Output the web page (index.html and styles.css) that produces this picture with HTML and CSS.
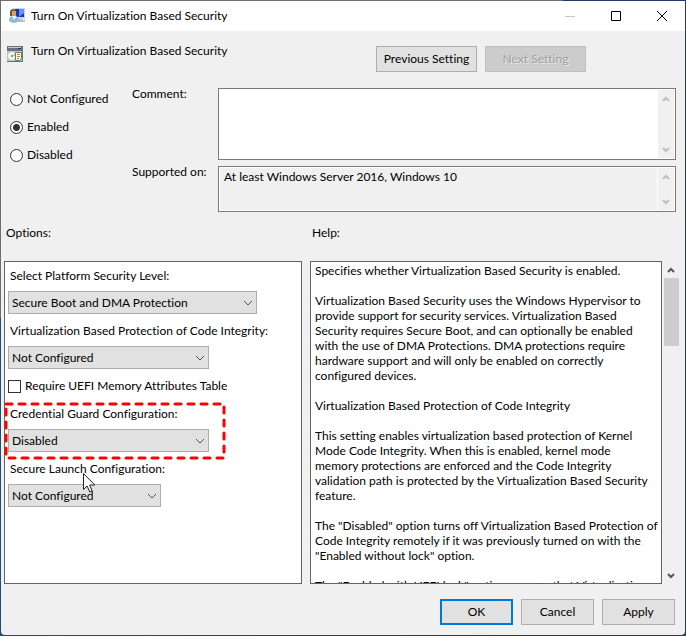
FILE: index.html
```
<!DOCTYPE html>
<html lang="en">
<head>
  <meta charset="UTF-8" />
  <meta name="viewport" content="width=device-width, initial-scale=1" />
  <title>Turn On Virtualization Based Security</title>
  <link rel="stylesheet" href="styles.css">
</head>
<body>
  <div class="window">
    <header class="titlebar">
      <svg class="icon" width="16" height="16" viewBox="0 0 16 16" aria-hidden="true">
        <path d="M4 0h12v11H5z" fill="#cdd3de"/>
        <path d="M6 1h9v8H6z" fill="#1238b4"/>
        <path d="M10 1h5v4l-5 4z" fill="#5f93f2"/>
        <path d="M9 11h4v1h3v2H9z" fill="#bdbdb4"/>
        <path d="M1 3q3-4 6 0v5H1z" fill="#6b5940"/>
        <path d="M3 3h4v5H3z" fill="#d9a266"/>
        <path d="M0 13q0-5 4-5 5 0 6 5-5 4-10 0z" fill="#8dbbe0"/>
        <path d="M3 8l2 4 3-4z" fill="#e9f5fd"/>
      </svg>
      <h1>Turn On Virtualization Based Security</h1>
      <div class="caption-buttons">
        <button type="button" aria-label="Minimize" disabled>
          <svg width="12" height="12" viewBox="0 0 12 12"><path d="M1 6.5h10" stroke="#c8c8c8"/></svg>
        </button>
        <button type="button" aria-label="Maximize">
          <svg width="12" height="12" viewBox="0 0 12 12"><path d="M1.5 1.5h9v9h-9z" fill="none" stroke="#000"/></svg>
        </button>
        <button type="button" aria-label="Close">
          <svg width="12" height="12" viewBox="0 0 12 12"><path d="M1 1l10 10M11 1L1 11" stroke="#000"/></svg>
        </button>
      </div>
    </header>

    <form class="dialog">
      <div class="setting-row">
        <div class="setting-name">
          <svg class="icon" width="16" height="16" viewBox="0 0 16 16" aria-hidden="true">
            <path d="M0 0h16v16H0z" fill="#4b8583"/>
            <path d="M0 0h15v5H0z" fill="#6d6d8c"/>
            <path d="M1 1h13v1H1z" fill="#c9c9d8"/>
            <path d="M11 2h3v1h-3z" fill="#30304a"/>
            <path d="M0 5h15v10H0z" fill="#b9c6b8"/>
            <circle cx="5" cy="10" r="4" fill="#f3f3ee"/>
            <path d="M5 10l3-3 1 3z" fill="#b9d8b0"/>
            <circle cx="5" cy="10" r="1" fill="#6d7f6a"/>
            <path d="M8.5 6.500h6v6l-2 2h-4z" fill="#fff6d2" stroke="#7d745a"/>
            <path d="M10 8.500h3M10 10.500h3M10 12.500h2" stroke="#948c70"/>
          </svg>
          <span>Turn On Virtualization Based Security</span>
        </div>
        <div class="nav-buttons">
          <button type="button" class="btn wide">Previous Setting</button>
          <button type="button" class="btn wide" disabled>Next Setting</button>
        </div>
      </div>

      <div class="state-row">
        <div class="states">
          <label><input type="radio" name="state">Not Configured</label>
          <label><input type="radio" name="state" checked>Enabled</label>
          <label><input type="radio" name="state">Disabled</label>
        </div>
        <div class="fields">
          <label for="comment">Comment:</label>
          <div class="box comment">
            <textarea id="comment"></textarea>
            <div class="scroll">
              <svg width="8" height="6" viewBox="0 0 8 6"><path d="M1 5l3-3 3 3"/></svg>
              <svg width="8" height="6" viewBox="0 0 8 6"><path d="M1 1l3 3 3-3"/></svg>
            </div>
          </div>
          <label for="supported">Supported on:</label>
          <div class="box supported">
            <textarea id="supported" readonly>At least Windows Server 2016, Windows 10</textarea>
            <div class="scroll">
              <svg width="8" height="6" viewBox="0 0 8 6"><path d="M1 5l3-3 3 3"/></svg>
              <svg width="8" height="6" viewBox="0 0 8 6"><path d="M1 1l3 3 3-3"/></svg>
            </div>
          </div>
        </div>
      </div>

      <div class="panels">
        <h2>Options:</h2>
        <h2><label for="help">Help:</label></h2>

        <div class="options">
          <div class="option">
            <label for="platform">Select Platform Security Level:</label>
            <div class="select large">
              <select id="platform"><option>Secure Boot and DMA Protection</option></select>
              <svg width="10" height="6" viewBox="0 0 10 6"><path d="M1 1l4 4 4-4"/></svg>
            </div>
          </div>
          <div class="option">
            <label for="integrity">Virtualization Based Protection of Code Integrity:</label>
            <div class="select medium">
              <select id="integrity"><option>Not Configured</option></select>
              <svg width="10" height="6" viewBox="0 0 10 6"><path d="M1 1l4 4 4-4"/></svg>
            </div>
          </div>
          <label class="check"><input type="checkbox">Require UEFI Memory Attributes Table</label>
          <div class="option">
            <label for="guard">Credential Guard Configuration:</label>
            <div class="select medium">
              <select id="guard"><option>Disabled</option></select>
              <svg width="10" height="6" viewBox="0 0 10 6"><path d="M1 1l4 4 4-4"/></svg>
            </div>
            <svg class="highlight" width="222" height="58" viewBox="0 0 222 58" aria-hidden="true">
              <rect x="2" y="2" width="218" height="54"/>
            </svg>
          </div>
          <div class="option">
            <label for="launch">Secure Launch Configuration:</label>
            <div class="select small">
              <select id="launch"><option>Not Configured</option></select>
              <svg width="10" height="6" viewBox="0 0 10 6"><path d="M1 1l4 4 4-4"/></svg>
            </div>
            <svg class="pointer" width="13" height="20" viewBox="0 0 13 20" aria-hidden="true">
              <path d="M.5.5v16l3.600-3.500 2.700 6 2.400-1-2.600-6h5.200z"/>
            </svg>
          </div>
        </div>

        <div class="help">
          <textarea id="help" readonly>Specifies whether Virtualization Based Security is enabled.

Virtualization Based Security uses the Windows Hypervisor to
provide support for security services. Virtualization Based
Security requires Secure Boot, and can optionally be enabled
with the use of DMA Protections. DMA protections require
hardware support and will only be enabled on correctly
configured devices.

Virtualization Based Protection of Code Integrity

This setting enables virtualization based protection of Kernel
Mode Code Integrity. When this is enabled, kernel mode
memory protections are enforced and the Code Integrity
validation path is protected by the Virtualization Based Security
feature.

The "Disabled" option turns off Virtualization Based Protection of
Code Integrity remotely if it was previously turned on with the
"Enabled without lock" option.

The "Enabled with UEFI lock" option ensures that Virtualization</textarea>
          <div class="scroll active">
            <svg width="8" height="6" viewBox="0 0 8 6"><path d="M1 5l3-3 3 3"/></svg>
            <div class="thumb"></div>
            <svg width="8" height="6" viewBox="0 0 8 6"><path d="M1 1l3 3 3-3"/></svg>
          </div>
        </div>
      </div>

      <div class="actions">
        <button type="button" class="btn default">OK</button>
        <button type="button" class="btn">Cancel</button>
        <button type="button" class="btn">Apply</button>
      </div>
    </form>
  </div>
</body>
</html>
```
FILE: styles.css
```
* {
  box-sizing: border-box;
}
body {
  margin: 0;
  font: 12px/16px Lato, "Open Sans", sans-serif;
  font-variant-ligatures: none;
  color: #000;
  background: linear-gradient(to right, #6d6d6d 82%, #1f3a68 82%) top / 100% 50% no-repeat,
    linear-gradient(to right, #1f4e75, #1f3a68);
}
.window {
  display: flex;
  flex-direction: column;
  min-height: 100vh;
  border: 1px solid transparent;
}
button, select, textarea {
  font: inherit;
  font-variant-ligatures: none;
  color: inherit;
}
input {
  margin: 0;
}
h1, h2 {
  margin: 0;
  font-size: 12px;
  font-weight: normal;
}
.icon {
  flex: none;
}

.titlebar {
  display: flex;
  align-items: center;
  gap: 6px;
  height: 30px;
  padding-left: 8px;
  background: #fff;
}
.caption-buttons {
  display: flex;
  margin-left: auto;
}
.caption-buttons button {
  display: flex;
  align-items: center;
  justify-content: center;
  width: 46px;
  height: 30px;
  padding: 0;
  border: 0;
  background: none;
}

.dialog {
  flex: 1;
  display: flex;
  flex-direction: column;
  padding: 15px 6px 10px 3px;
  background: #f0f0f0;
  border-radius: 0 0 4px 4px;
}
.setting-row {
  display: flex;
}
.setting-name {
  display: flex;
  align-items: flex-start;
  gap: 8px;
  width: 372px;
  padding-left: 3px;
}
.setting-name span {
  margin-top: -3px;
}
.nav-buttons, .actions {
  display: flex;
  gap: 8px;
}
.btn {
  width: 73px;
  height: 26px;
  padding: 0;
  border: 1px solid #adadad;
  background: #e1e1e1;
  white-space: nowrap;
}
.btn.wide {
  width: 101px;
}
.btn:disabled {
  border-color: #bfbfbf;
  background: #ccc;
  color: #a0a0a0;
  text-shadow: 1px 1px #e8e8e8;
}
.btn.default {
  border: 2px solid #0078d7;
}

.state-row {
  display: flex;
  margin: 16px 3px 0 0;
}
.states {
  display: flex;
  flex-direction: column;
  gap: 12px;
  width: 128px;
  padding: 3px 0 0 6px;
}
.states label, .check {
  display: flex;
  align-items: center;
  gap: 4px;
}
.states input {
  appearance: none;
  width: 13px;
  height: 13px;
  border: 1px solid #333;
  border-radius: 50%;
  background: #fff;
}
.states input:checked {
  background: radial-gradient(circle, #333 3px, #fff 4px);
}
.fields {
  flex: 1;
  display: grid;
  grid-template-columns: 86px 1fr;
  gap: 6px 0;
}
.fields label {
  margin-top: -2px;
  white-space: nowrap;
}
.box {
  display: flex;
  padding: 1px;
  border: 1px solid #7a7a7a;
  background: #fff;
}
.box textarea {
  flex: 1;
  min-width: 0;
  height: 100%;
  padding: 1px 4px;
  border: 0;
  resize: none;
  overflow: hidden;
  background: transparent;
}
.comment {
  height: 72px;
}
.supported {
  height: 46px;
}
.supported textarea {
  background: #f0f0f0;
  margin-right: 1px;
}
.scroll {
  display: flex;
  flex-direction: column;
  align-items: center;
  justify-content: space-between;
  flex: none;
  width: 16px;
  padding: 6px 0 5px;
  background: #f0f0f0;
}
.scroll path {
  fill: none;
  stroke: #bfbfbf;
  stroke-width: 2;
}
.scroll.active path {
  stroke: #555;
}

.panels {
  flex: 1;
  display: grid;
  grid-template-columns: 298fr 369fr;
  grid-template-rows: 16px minmax(323px, 1fr);
  gap: 20px 8px;
  margin-top: 13px;
}
.panels h2 {
  padding-left: 2px;
}
.options {
  display: flex;
  flex-direction: column;
  gap: 9px;
  padding: 6px 3px;
  border: 1px solid #646464;
  background: #fff;
}
.option {
  position: relative;
  display: flex;
  flex-direction: column;
  gap: 7px;
}
.option label {
  padding-left: 2px;
}
.select {
  display: grid;
  align-items: center;
}
.select.large {
  width: 249px;
}
.select.medium {
  width: 201px;
}
.select.small {
  width: 153px;
}
.select select, .select svg {
  grid-area: 1 / 1;
}
.select select {
  appearance: none;
  width: 100%;
  height: 23px;
  padding: 0 3px;
  border: 1px solid #adadad;
  border-radius: 0;
  background: #e1e1e1;
}
.select svg {
  justify-self: end;
  margin-right: 4px;
  pointer-events: none;
}
.select path {
  fill: none;
  stroke: #505050;
}
.check {
  margin-bottom: 3px;
}
.check input {
  appearance: none;
  width: 13px;
  height: 13px;
  border: 1px solid #333;
  background: #fff;
}
.highlight {
  position: absolute;
  top: -4px;
  left: -4px;
  pointer-events: none;
}
.highlight rect {
  fill: none;
  stroke: #f00;
  stroke-width: 3;
  stroke-dasharray: 6 7;
  stroke-linecap: round;
}
.pointer {
  position: absolute;
  top: 12px;
  left: 75px;
  pointer-events: none;
}
.pointer path {
  fill: #fff;
  stroke: #222;
}

.help {
  display: flex;
}
.help textarea {
  flex: 1;
  min-width: 0;
  padding: 1px 0 0 4px;
  border: 1px solid #646464;
  background: #fff;
  line-height: 15px;
  white-space: pre;
  resize: none;
  overflow: hidden;
}
.help .scroll {
  justify-content: flex-start;
  margin-left: 1px;
  padding: 6px 0 5px;
}
.thumb {
  width: 15px;
  height: 68px;
  margin: 5px 0 auto;
  background: #cdcdcd;
}
.actions {
  justify-content: flex-end;
  margin: 15px 4px 0 0;
}
```
